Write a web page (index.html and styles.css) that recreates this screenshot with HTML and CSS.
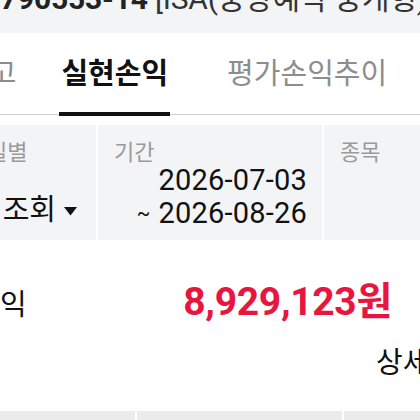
FILE: index.html
```html
<!DOCTYPE html>
<html lang="ko">
<head>
<meta charset="utf-8">
<link rel="stylesheet" href="styles.css">
</head>
<body>
<div class="page">
  <header class="acct">
    <div class="acct-text"><b class="acct-no">790553-14</b> [ISA(중앙예탁 중개형)]</div>
  </header>
  <nav class="tabs">
    <div class="tab">잔고</div>
    <div class="tab active">실현손익</div>
    <div class="tab tab-last">평가손익추이</div>
  </nav>
  <section class="filters">
    <div class="cell cell-type">
      <div class="label">일별</div>
      <div class="value"><span class="value-text">전체 조회</span><svg class="caret" width="13" height="9" viewBox="0 0 13 9"><polygon points="0,0 13,0 6.5,8.5" fill="#111"/></svg></div>
    </div>
    <div class="cell cell-period">
      <div class="label">기간</div>
      <div class="dates">
        <div>2026-07-03</div>
        <div><span class="tilde">~</span>2026-08-26</div>
      </div>
    </div>
    <div class="cell cell-item">
      <div class="label">종목</div>
    </div>
  </section>
  <section class="summary">
    <span class="sum-label">실현손익</span>
    <span class="sum-amt">8,929,123원</span>
  </section>
  <div class="detail-row"><span class="detail">상세내역</span></div>
  <div class="bottom-cells">
    <div class="bcell b1"></div>
    <div class="bcell b2"></div>
    <div class="bcell b3"></div>
  </div>
</div>
</body>
</html>
```
FILE: styles.css
```css
html, body {
  margin: 0;
  padding: 0;
  background: #ffffff;
}
body {
  width: 420px;
  height: 420px;
  overflow: hidden;
  font-family: Roboto, "Noto Sans CJK KR", sans-serif;
  color: #1a1a1a;
}
.page {
  width: 420px;
  display: flex;
  flex-direction: column;
}
.acct {
  height: 33px;
  background: #f3f4f6;
  overflow: hidden;
  white-space: nowrap;
}
.acct-text {
  font-size: 30px;
  line-height: 30px;
  margin-top: -16px;
  color: #333;
  letter-spacing: -0.2px;
}
.acct-no {
  font-weight: 700;
  color: #222;
}
.tabs {
  display: flex;
  height: 81px;
  border-bottom: 1px solid #cfcfcf;
  margin-left: -37px;
  gap: 45px;
  white-space: nowrap;
}
.tab {
  position: relative;
  font-size: 29px;
  line-height: 83px;
  color: #8d8d8d;
}
.tab-last {
  margin-left: 14px;
}
.tab.active {
  color: #111;
  font-weight: 700;
}
.tab.active::after {
  content: "";
  position: absolute;
  left: -2px;
  right: -2px;
  bottom: -2px;
  height: 4px;
  background: #111;
}
.filters {
  margin-top: 10px;
  height: 115px;
  display: grid;
  grid-template-columns: 125px 224px 1fr;
  gap: 2px;
  margin-left: -29px;
  background: #ffffff;
}
.cell {
  background: #f3f4f6;
  padding: 17px 15px 0 16px;
  display: flex;
  flex-direction: column;
  min-width: 0;
}
.label {
  font-size: 22px;
  line-height: 22px;
  color: #9a9a9a;
}
.value {
  margin-top: 30px;
  font-size: 29px;
  line-height: 33px;
  color: #111;
  display: flex;
  align-items: center;
  justify-content: flex-end;
  padding-right: 4px;
  white-space: nowrap;
}
.value-text {
  flex-shrink: 0;
}
.caret {
  flex-shrink: 0;
  margin-left: 8px;
  margin-top: 2px;
}
.dates {
  font-size: 29px;
  line-height: 33px;
  color: #111;
  text-align: right;
  letter-spacing: 0.2px;
}
.tilde {
  font-size: 20px;
  margin-right: 8px;
  position: relative;
  top: -3px;
}
.summary {
  margin-top: 40px;
  height: 44px;
  display: flex;
  align-items: baseline;
  white-space: nowrap;
}
.sum-label {
  font-size: 29px;
  line-height: 44px;
  margin-left: -80px;
  color: #111;
}
.sum-amt {
  margin-left: auto;
  margin-right: 28px;
  font-size: 39px;
  line-height: 44px;
  font-weight: 700;
  color: #e8163f;
  letter-spacing: -0.3px;
}
.detail-row {
  margin-top: 21px;
  height: 36px;
  display: flex;
  white-space: nowrap;
}
.detail {
  margin-left: 376px;
  font-size: 29px;
  line-height: 36px;
  color: #111;
}
.bottom-cells {
  margin-top: 30px;
  height: 30px;
  display: grid;
  grid-template-columns: 135px 205px 1fr;
  gap: 2px;
}
.bcell {
  background: #ececec;
}
```
